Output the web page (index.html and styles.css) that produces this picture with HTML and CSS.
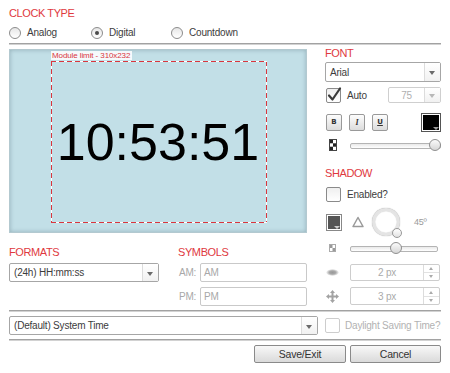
FILE: index.html
```html
<!DOCTYPE html>
<html lang="en">
<head>
    <meta charset="UTF-8">
    <meta name="viewport" content="width=device-width, initial-scale=1.0">
    <title>Clock settings</title>
    <link rel="stylesheet" href="styles.css">
</head>
<body>
<div class="app">
    <div class="title">CLOCK TYPE</div>
    <div class="radios">
        <div class="radio"><span class="dot"></span>Analog</div>
        <div class="radio on"><span class="dot"></span>Digital</div>
        <div class="radio"><span class="dot"></span>Countdown</div>
    </div>
    <div class="sep"></div>

    <div class="main">
        <div class="left">
            <div class="preview">
                <div class="limit">
                    <span class="limit-label">Module limit - 310x232</span>
                    <div class="time">10:53:51</div>
                </div>
            </div>
            <div class="fields">
                <div class="formats">
                    <div class="title">FORMATS</div>
                    <div class="select fmt"><span class="val">(24h) HH:mm:ss</span><span class="arrow"></span></div>
                </div>
                <div class="symbols">
                    <div class="title">SYMBOLS</div>
                    <div class="sym-row"><span class="sym-label">AM:</span><div class="input off">AM</div></div>
                    <div class="sym-row"><span class="sym-label">PM:</span><div class="input off">PM</div></div>
                </div>
            </div>
        </div>

        <div class="right">
            <div class="title">FONT</div>
            <div class="select font-select"><span class="val">Arial</span><span class="arrow"></span></div>
            <div class="row auto-row">
                <span class="check">
                    <svg width="16" height="17" viewBox="0 0 16 17"><path d="M3 9.5 L6.5 13.5 L14 2.5" fill="none" stroke="#3a3a3a" stroke-width="2.2" stroke-linecap="round" stroke-linejoin="round"/></svg>
                </span>
                <span class="label">Auto</span>
                <div class="select size off"><span class="val">75</span><span class="arrow"></span></div>
            </div>
            <div class="row style-row">
                <span class="btn-s b">B</span>
                <span class="btn-s i">I</span>
                <span class="btn-s u">U</span>
                <span class="swatch"><span class="fill"></span></span>
            </div>
            <div class="row slider-row">
                <span class="icon-col">
                    <svg width="8" height="12" viewBox="0 0 8 12"><rect x="0.5" y="0.5" width="7" height="11" fill="#fff" stroke="#444"/><rect x="1" y="1" width="3" height="3.3" fill="#222"/><rect x="4" y="4.3" width="3" height="3.4" fill="#222"/><rect x="1" y="7.7" width="3" height="3.3" fill="#222"/></svg>
                </span>
                <div class="slider"><span class="thumb" style="left: calc((100% - 12px) * 1)"></span></div>
            </div>

            <div class="title shadow-title">SHADOW</div>
            <div class="row enabled-row">
                <span class="check"></span>
                <span class="label">Enabled?</span>
            </div>
            <div class="row shadow-row">
                <span class="swatch dark"><span class="fill"></span></span>
                <svg class="tri" width="12" height="12" viewBox="0 0 12 12"><path d="M6 1.5 L11 10.5 H1 Z" fill="none" stroke="#9a9a9a" stroke-width="1.5" stroke-linejoin="round"/></svg>
                <span class="dial"><span class="knob"></span></span>
                <span class="angle">45º</span>
            </div>
            <div class="row slider-row small">
                <span class="icon-col">
                    <svg width="7" height="8" viewBox="0 0 7 8"><rect x="0.5" y="0.5" width="6" height="7" fill="#fff" stroke="#aaa"/><rect x="1" y="1" width="2.5" height="3" fill="#999"/><rect x="3.5" y="4" width="2.5" height="3" fill="#999"/></svg>
                </span>
                <div class="slider"><span class="thumb" style="left: calc((100% - 12px) * 0.52)"></span></div>
            </div>
            <div class="row spin-row">
                <span class="icon-col"><span class="blur"></span></span>
                <div class="spin"><span class="val">2 px</span><span class="updown"><span class="up"></span><span class="down"></span></span></div>
            </div>
            <div class="row spin-row second">
                <span class="icon-col">
                    <svg width="13" height="13" viewBox="0 0 13 13"><path d="M6.5 0 L9 3 H7.5 V5.5 H10 V4 L13 6.5 L10 9 V7.5 H7.5 V10 H9 L6.5 13 L4 10 H5.5 V7.5 H3 V9 L0 6.5 L3 4 V5.5 H5.5 V3 H4 Z" fill="#a3a3a3"/></svg>
                </span>
                <div class="spin"><span class="val">3 px</span><span class="updown"><span class="up"></span><span class="down"></span></span></div>
            </div>
        </div>
    </div>

    <div class="sep low"></div>
    <div class="zone-row">
        <div class="select zone"><span class="val">(Default) System Time</span><span class="arrow"></span></div>
        <span class="check disabled"></span>
        <span class="dst">Daylight Saving Time?</span>
    </div>
    <div class="sep low"></div>
    <div class="buttons">
        <button class="btn save">Save/Exit</button>
        <button class="btn cancel">Cancel</button>
    </div>
</div>
</body>
</html>
```

FILE: styles.css
```css
* {margin:0;padding:0;box-sizing:border-box;}
body {font-family:"Liberation Sans", Arial, sans-serif;font-size:10px;letter-spacing:-0.2px;color:#3c3c3c;background:#fff;}
.app {width:432px;margin-left:9px;padding-top:7px;}

.title {font-size:11px;line-height:13px;letter-spacing:-0.4px;color:#e0393e;}

/* clock type radios */
.radios {display:grid;grid-template-columns:82px 80px auto;margin-top:7px;height:12px;}
.radio {display:flex;align-items:center;gap:6px;line-height:12px;}
.dot {position:relative;width:12px;height:12px;border-radius:50%;border:1px solid #8c8c8c;background:linear-gradient(#e6e6e6,#fff);}
.radio.on .dot::after {content:"";position:absolute;left:3px;top:3px;width:4px;height:4px;border-radius:50%;background:#4a4a4a;}

.sep {height:2px;margin-top:4px;border-top:1px solid #a2a2a2;border-bottom:1px solid #d2d2d2;}

.main {display:grid;grid-template-columns:298px 116px;gap:18px;margin-top:2px;}

/* preview */
.preview {margin-top:2px;height:184px;background:#c2dfe7;border:1px solid #b3c9d0;box-shadow:inset 0 0 4px rgba(60,90,100,.35);display:flex;align-items:center;justify-content:center;}
.limit {
    position:relative;width:216px;height:162px;margin:2px 0 0 2px;
    display:flex;align-items:center;justify-content:center;
    background:
        repeating-linear-gradient(90deg,#d9363e 0 5px,#fff 5px 8px) top left/100% 1px no-repeat,
        repeating-linear-gradient(90deg,#d9363e 0 5px,#fff 5px 8px) bottom left/100% 1px no-repeat,
        repeating-linear-gradient(180deg,#d9363e 0 5px,#fff 5px 8px) top left/1px 100% no-repeat,
        repeating-linear-gradient(180deg,#d9363e 0 5px,#fff 5px 8px) top right/1px 100% no-repeat;
}
.limit-label {position:absolute;left:0;bottom:100%;margin-bottom:1px;padding:0 2px 0 1px;font-size:8px;line-height:9px;letter-spacing:-0.1px;color:#d9363e;background:rgba(255,255,255,.85);white-space:nowrap;}
.time {font-size:52px;line-height:1;letter-spacing:0;color:#000;margin-left:-2px;}

/* formats + symbols */
.fields {display:grid;grid-template-columns:150px 1fr;gap:19px;margin-top:13px;}
.fmt {margin-top:4px;height:19px;}
.sym-row {display:flex;align-items:center;margin-top:4px;}
.sym-row + .sym-row {margin-top:5px;}
.sym-label {width:22px;padding-left:1px;color:#a8a8a8;}
.input {flex:1;height:19px;border:1px solid #c9c9c9;border-radius:2px;padding-left:3px;line-height:17px;background:#fff;}
.input.off {color:#a8a8a8;}

/* select */
.select {display:flex;align-items:center;border:1px solid #a6a6a6;border-radius:2px;background:#fff;}
.select .val {flex:1;padding-left:4px;white-space:nowrap;overflow:hidden;}
.select .arrow {position:relative;align-self:stretch;width:16px;border-left:1px solid #dcdcdc;background:linear-gradient(#fff,#f1f1f1);}
.select .arrow::after {content:"";position:absolute;left:4px;top:50%;margin-top:-1px;border-left:3.5px solid transparent;border-right:3.5px solid transparent;border-top:4px solid #6a6a6a;}
.select.off {border-color:#cfcfcf;color:#b0b0b0;}
.select.off .arrow::after {border-top-color:#b8b8b8;}

/* right column */
.row {display:flex;align-items:center;}
.font-select {margin-top:2px;height:20px;}
.auto-row {margin-top:5px;height:16px;}
.check {position:relative;width:15px;height:15px;margin-left:1px;border:1px solid #8a8a8a;border-radius:2px;background:linear-gradient(#efefef,#fff);}
.check svg {position:absolute;left:-1px;top:-3px;}
.row .label {margin-left:6px;}
.size {margin-left:auto;width:53px;height:16px;}
.size .val {text-align:center;padding-left:0;}

.style-row {margin-top:10px;height:18px;}
.btn-s {display:flex;align-items:center;justify-content:center;width:16px;height:17px;margin-left:1px;margin-right:6px;border:1px solid #999;border-radius:2px;background:linear-gradient(#fdfdfd,#dcdcdc);font-family:"DejaVu Sans", sans-serif;font-size:7px;font-weight:bold;color:#333;letter-spacing:0;}
.btn-s.i {font-style:italic;font-family:"Liberation Serif", serif;font-size:8px;}
.btn-s.u {text-decoration:underline;}
.swatch {position:relative;margin-left:auto;width:20px;height:19px;border:1px solid #555;padding:1px;background:#fff;}
.swatch .fill {display:block;width:100%;height:100%;background:#000;}
.swatch::after {content:"";position:absolute;right:1px;bottom:1px;border-left:3px solid transparent;border-right:3px solid transparent;border-top:3px solid #9a9a9a;}

.slider-row {margin-top:7px;height:14px;}
.icon-col {width:25px;display:flex;align-items:center;justify-content:center;padding-right:10px;}
.slider {position:relative;flex:1;height:12px;}
.slider::before {content:"";position:absolute;left:0;right:0;top:4px;height:4px;border:1px solid #b4b4b4;border-radius:2px;background:linear-gradient(#e9e9e9,#fff);}
.thumb {position:absolute;top:0;width:12px;height:12px;border-radius:50%;border:1px solid #8f8f8f;background:linear-gradient(#fbfbfb,#d6d6d6);}

.shadow-title {margin-top:15px;}
.enabled-row {margin-top:7px;height:15px;}
.shadow-row {margin-top:6px;height:28px;}
.swatch.dark {margin-left:1px;width:16px;height:17px;border-color:#888;}
.swatch.dark .fill {background:#555;}
.swatch.dark::after {border-top-color:#ccc;}
.tri {margin-left:10px;}
.dial {position:relative;width:28px;height:28px;margin-left:8px;border-radius:50%;border:3px solid #e4e4e4;box-shadow:0 0 1px 0 #9a9a9a, inset 0 0 1px 0 #9a9a9a;background:#fff;}
.knob {position:absolute;right:-5px;bottom:-5px;width:10px;height:10px;border-radius:50%;border:1px solid #999;background:linear-gradient(#fff,#e2e2e2);}
.angle {margin-left:14px;margin-top:-1px;font-size:9px;color:#9a9a9a;}

.slider-row.small {margin-top:6px;height:12px;}
.slider-row.small .slider {margin-right:3px;}

.spin-row {margin-top:10px;height:17px;}
.spin-row.second {margin-top:6px;height:18px;}
.blur {display:block;width:13px;height:7px;border-radius:50%;background:radial-gradient(ellipse at center,#999 0,#a8a8a8 35%,rgba(170,170,170,0) 72%);}
.spin {flex:1;height:100%;display:flex;margin-right:1px;border:1px solid #cdcdcd;border-radius:2px;background:#fff;color:#aaa;}
.spin .val {flex:1;text-align:center;align-self:center;}
.updown {display:flex;flex-direction:column;width:16px;border-left:1px solid #dcdcdc;}
.updown span {position:relative;flex:1;}
.updown .up {border-bottom:1px solid #e2e2e2;}
.updown .up::after, .updown .down::after {content:"";position:absolute;left:5px;border-left:2.5px solid transparent;border-right:2.5px solid transparent;}
.updown .up::after {bottom:2px;border-bottom:3px solid #aaa;}
.updown .down::after {top:2px;border-top:3px solid #aaa;}

/* bottom */
.sep.low {margin-top:4px;}
.zone-row {display:flex;align-items:center;margin-top:4px;height:19px;}
.zone {width:309px;height:19px;}
.check.disabled {margin-left:7px;border-color:#cdcdcd;background:#fff;}
.dst {margin-left:5px;color:#b2b2b2;white-space:nowrap;}

.buttons {display:flex;justify-content:flex-end;gap:4px;margin-top:4px;}
.btn {height:18px;border:1px solid #8a8a8a;border-radius:2px;background:linear-gradient(#f8f8f8,#dadada);font-family:"Liberation Sans", Arial, sans-serif;font-size:10.5px;letter-spacing:-0.2px;color:#333;}
.btn.save {width:92px;}
.btn.cancel {width:91px;}
```
